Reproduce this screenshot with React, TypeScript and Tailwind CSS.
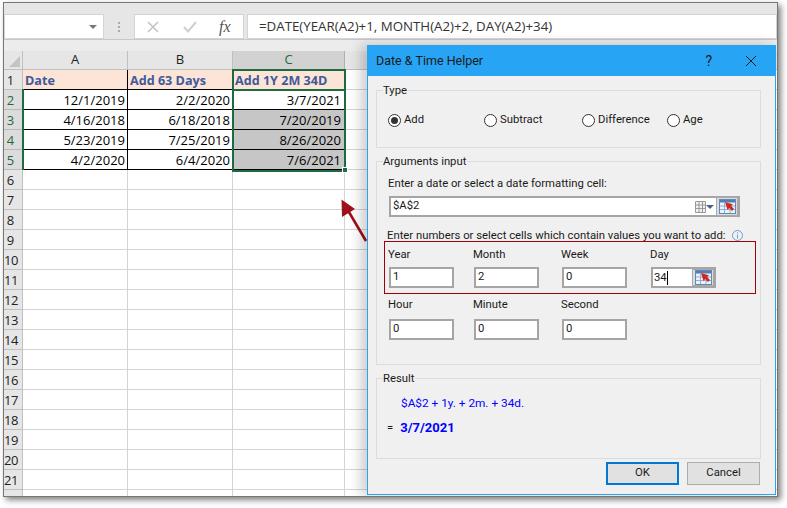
const rows: [string, string, string][] = [
  ["12/1/2019", "2/2/2020", "3/7/2021"],
  ["4/16/2018", "6/18/2018", "7/20/2019"],
  ["5/23/2019", "7/25/2019", "8/26/2020"],
  ["4/2/2020", "6/4/2020", "7/6/2021"],
];
const emptyRows = [6, 7, 8, 9, 10, 11, 12, 13, 14, 15, 16, 17, 18, 19, 20, 21];

function RefIcon() {
  return (
    <svg width="17" height="15" viewBox="0 0 17 15">
      <rect x="0.5" y="0.5" width="16" height="14" fill="#eaf2fb" stroke="#6488b4" />
      <rect x="1" y="1" width="15" height="2.5" fill="#4f7fb8" />
      <path d="M1 7H16M1 10.5H16M5.5 3.5V14M11 3.5V14" stroke="#8fb0d4" />
      <path d="M6 3L14 5.5L12.2 7L15 10L13 12L10.2 9L8.5 11Z" fill="#d0281c" />
    </svg>
  );
}

function RefButton({ className }: { className: string }) {
  return (
    <div className={`flex items-center justify-center border border-[#a9a9a9] bg-[#dcdcdc] ${className}`}>
      <RefIcon />
    </div>
  );
}

function Radio({ label, checked, className }: { label: string; checked?: boolean; className: string }) {
  return (
    <div className={`flex items-center gap-[3px] ${className}`}>
      <div className="flex h-[13px] w-[13px] items-center justify-center rounded-full border border-[#333] bg-white">
        {checked && <div className="h-[7px] w-[7px] rounded-full bg-[#333]" />}
      </div>
      <span>{label}</span>
    </div>
  );
}

function Field({ label, value, className, labelHeight }: { label: string; value: string; className: string; labelHeight: string }) {
  return (
    <div className={className}>
      <div className={`leading-[20px] ${labelHeight}`}>{label}</div>
      <div className="ml-px flex h-[21px] w-[65px] items-center border-2 border-[#a5a5a5] bg-white pl-[2px]">{value}</div>
    </div>
  );
}

function Group({ title, className, children }: { title: string; className: string; children: React.ReactNode }) {
  return (
    <div className={`relative ml-[8px] mr-[14px] border border-[#dcdcdc] ${className}`}>
      <span className="absolute left-[6px] top-[-8px] bg-[#f0f0f0] pr-[1px] leading-[15px]">{title}</span>
      {children}
    </div>
  );
}

export default function App() {
  return (
    <div className="h-[508px] w-[787px] overflow-hidden bg-white pl-[3px] pt-[2px] font-['Open_Sans',sans-serif] text-[13px] text-[#222]">
      <div className="relative flex h-[495px] w-[775px] flex-col overflow-hidden border border-[#777] shadow-[3px_3px_6px_rgba(0,0,0,0.5)]">
        {/* formula bar */}
        <div className="flex h-[37px] shrink-0 items-end gap-[3px] border-b border-[#c8c8c8] bg-[#e6e6e6]">
          <div className="flex h-[25px] w-[100px] items-center justify-end border border-[#d4d4d4] bg-white pr-[6px]">
            <div className="h-0 w-0 border-x-[4px] border-t-[4px] border-x-transparent border-t-[#777]" />
          </div>
          <div className="flex h-[25px] w-[24px] items-center justify-center">
            <div className="flex flex-col gap-[2px]">
              <div className="h-[2px] w-[2px] bg-[#aaa]" />
              <div className="h-[2px] w-[2px] bg-[#aaa]" />
              <div className="h-[2px] w-[2px] bg-[#aaa]" />
            </div>
          </div>
          <div className="flex h-[25px] w-[110px] items-center border border-[#d4d4d4] bg-white pl-[12px]">
            <svg width="12" height="12" viewBox="0 0 12 12" fill="none" stroke="#c4c4c4" strokeWidth="1.6">
              <path d="M1 1L11 11M11 1L1 11" />
            </svg>
            <svg className="ml-[24px]" width="14" height="12" viewBox="0 0 14 12" fill="none" stroke="#d0d0d0" strokeWidth="2">
              <path d="M1 6L5 10.5L13 1" />
            </svg>
            <span className="ml-[22px] font-['Liberation_Serif',serif] text-[16px] italic leading-none text-[#555]">fx</span>
          </div>
          <div className="flex h-[25px] flex-1 items-center border border-[#d4d4d4] bg-white pl-[11px] text-[13.3px] text-[#333]">
            =DATE(YEAR(A2)+1, MONTH(A2)+2, DAY(A2)+34)
          </div>
        </div>

        <div className="h-[11px] shrink-0 bg-[#ececec]" />

        {/* sheet */}
        <div className="flex h-[19px] shrink-0 leading-[17px]">
          <div className="flex w-[19px] items-end justify-end border-b border-r border-[#c0c0c0] bg-[#e6e6e6] pb-[2px] pr-[2px]">
            <div className="h-0 w-0 border-b-[11px] border-l-[11px] border-b-[#c4c4c4] border-l-transparent" />
          </div>
          <div className="w-[105px] border-b border-r border-[#c0c0c0] bg-[#e6e6e6] text-center">A</div>
          <div className="w-[105px] border-b border-r border-[#c0c0c0] bg-[#e6e6e6] text-center">B</div>
          <div className="w-[112px] border-b border-r border-[#b0b0b0] bg-[#d2d2d2] text-center text-[#1f6b41]">C</div>
          <div className="flex-1 border-b border-[#c0c0c0] bg-[#e6e6e6]" />
        </div>

        <div className="flex h-[20px] shrink-0 leading-[21px]">
          <div className="w-[19px] border-b border-r border-[#c0c0c0] bg-[#e6e6e6] pr-[5px] text-center">1</div>
          <div className="w-[105px] border-b border-r border-black bg-[#fce4d6] pl-[2px] text-[12.6px] font-bold text-[#3f5a9b]">Date</div>
          <div className="w-[105px] border-b border-r border-black bg-[#fce4d6] pl-[2px] text-[12.6px] font-bold text-[#3f5a9b]">Add 63 Days</div>
          <div className="w-[112px] border-b border-r border-black bg-[#fce4d6] pl-[2px] text-[12.6px] font-bold text-[#3f5a9b]">Add 1Y 2M 34D</div>
          <div className="flex-1 border-b border-[#d4d4d4]" />
        </div>

        {rows.map((row, i) => (
          <div key={row[0]} className="flex h-[20px] shrink-0 leading-[21px]">
            <div className="w-[19px] border-b border-r border-[#b8b8b8] bg-[#dcdcdc] pr-[5px] text-center text-[#1f6b41]">{i + 2}</div>
            <div className="w-[105px] border-b border-r border-black pr-[2px] text-right text-black">{row[0]}</div>
            <div className="w-[105px] border-b border-r border-black pr-[2px] text-right text-black">{row[1]}</div>
            <div className={`w-[112px] border-b border-r border-black pr-[3px] text-right text-black ${i > 0 ? "bg-[#c6c6c6]" : ""}`}>{row[2]}</div>
            <div className="flex-1 border-b border-[#d4d4d4]" />
          </div>
        ))}

        {emptyRows.map((n) => (
          <div key={n} className="flex h-[20px] shrink-0 leading-[21px]">
            <div className={`w-[19px] border-b border-r border-[#c0c0c0] bg-[#e6e6e6] pr-[5px] text-center ${n > 9 ? "tracking-[-0.5px]" : ""}`}>{n}</div>
            <div className="w-[105px] border-b border-r border-[#d4d4d4]" />
            <div className="w-[105px] border-b border-r border-[#d4d4d4]" />
            <div className="w-[112px] border-b border-r border-[#d4d4d4]" />
            <div className="flex-1 border-b border-[#d4d4d4]" />
          </div>
        ))}
        <div className="flex flex-1">
          <div className="w-[19px] border-r border-[#c0c0c0] bg-[#e6e6e6]" />
          <div className="w-[105px] border-r border-[#d4d4d4]" />
          <div className="w-[105px] border-r border-[#d4d4d4]" />
          <div className="w-[112px] border-r border-[#d4d4d4]" />
        </div>

        {/* selection overlays */}
        <div className="absolute left-[18px] top-[86px] h-[81px] w-[2px] bg-[#1f6b41]" />
        <div className="absolute left-[228px] top-[66px] h-[21px] w-[114px] border-x-2 border-t-2 border-[#1f6b41]" />
        <div className="absolute left-[228px] top-[86px] h-[83px] w-[114px] border-2 border-[#1f6b41]" />
        <div className="absolute left-[338px] top-[164px] h-[6px] w-[6px] border border-white bg-[#1f6b41]" />

        {/* callout arrow */}
        <svg className="absolute left-[330px] top-[190px]" width="40" height="55" viewBox="0 0 40 55" fill="none">
          <path d="M32 48L12 14" stroke="#a0101a" strokeWidth="2.6" />
          <path d="M7.5 6.5L8 24L21 16Z" fill="#a0101a" />
        </svg>

        {/* dialog */}
        <div className="absolute left-[363px] top-[42px] flex h-[450px] w-[409px] flex-col border border-[#29a4f2] bg-[#f0f0f0] font-['Roboto',sans-serif] text-[11.3px] text-[#1a1a1a] shadow-[-6px_0_12px_rgba(0,0,0,0.2)]">
          <div className="flex h-[30px] shrink-0 items-center bg-[#28a4f4] pl-[8px] text-[12.5px]">
            <span>Date &amp; Time Helper</span>
            <span className="ml-auto text-[14px]">?</span>
            <svg className="ml-[33px] mr-[18px]" width="12" height="12" viewBox="0 0 12 12" fill="none" stroke="#1a1a1a" strokeWidth="1">
              <path d="M1 1L11 11M11 1L1 11" />
            </svg>
          </div>

          <Group title="Type" className="mt-[14px] h-[58px]">
            <div className="flex pt-[21px]">
              <Radio label="Add" checked className="ml-[11px] w-[96px]" />
              <Radio label="Subtract" className="w-[98px]" />
              <Radio label="Difference" className="w-[85px]" />
              <Radio label="Age" className="" />
            </div>
          </Group>

          <Group title="Arguments input" className="mt-[13px] h-[204px]">
            <div className="pl-[11px] pt-[13px]">
              <div className="leading-[17px]">Enter a date or select a date formatting cell:</div>
              <div className="ml-px mt-[4px] flex h-[21px] w-[351px] items-center border-2 border-[#a5a5a5] bg-white pl-[2px]">
                <span>$A$2</span>
                <svg className="ml-auto" width="11" height="12" viewBox="0 0 11 12" fill="#f2f2f2" stroke="#999">
                  <path d="M0.5 0.5H10.5V11.5H0.5ZM0.5 4H10.5M0.5 7.5H10.5M4 0.5V11.5M7.5 0.5V11.5" />
                </svg>
                <div className="h-0 w-0 border-x-[4px] border-t-[4px] border-x-transparent border-t-[#4a6284]" />
                <RefButton className="ml-[2px] h-[19px] w-[22px]" />
              </div>
              <div className="ml-[-1px] mt-[10px] flex items-center leading-[17px]">
                <span>Enter numbers or select cells which contain values you want to add:</span>
                <svg className="ml-[6px]" width="11" height="11" viewBox="0 0 11 11" fill="none" stroke="#6d9ed8">
                  <circle cx="5.5" cy="5.5" r="5" />
                  <path d="M5.5 4.5V8.5M5.5 2.2V3.4" />
                </svg>
              </div>
            </div>
            <div className="ml-[7px] mr-[4px] mt-[-3px] flex h-[53px] border border-[#a0000a] pl-[3px] pt-[3px]">
              <Field label="Year" value="1" labelHeight="h-[22px]" className="w-[85px]" />
              <Field label="Month" value="2" labelHeight="h-[22px]" className="w-[88px]" />
              <Field label="Week" value="0" labelHeight="h-[22px]" className="w-[89px]" />
              <div>
                <div className="h-[22px] leading-[20px]">Day</div>
                <div className="ml-px flex h-[21px] w-[65px] items-center border-2 border-[#a5a5a5] bg-white pl-[1px]">
                  <span className="border-r border-black leading-[14px]">34</span>
                  <RefButton className="ml-auto h-[17px] w-[22px]" />
                </div>
              </div>
            </div>
            <div className="mt-[1px] flex pl-[11px]">
              <Field label="Hour" value="0" labelHeight="h-[24px]" className="w-[85px]" />
              <Field label="Minute" value="0" labelHeight="h-[24px]" className="w-[88px]" />
              <Field label="Second" value="0" labelHeight="h-[24px]" className="w-[89px]" />
            </div>
          </Group>

          <Group title="Result" className="mt-[13px] h-[81px]">
            <div className="pl-[24px] pt-[16px] text-[11.8px] leading-[17px] text-[#0000ff]">$A$2 + 1y. + 2m. + 34d.</div>
            <div className="mt-[7px] flex items-center pl-[10px] leading-[17px]">
              <span>=</span>
              <span className="ml-[7px] text-[13px] font-bold text-[#0000ff]">3/7/2021</span>
            </div>
          </Group>

          <div className="mr-[15px] mt-[3px] flex justify-end gap-[8px]">
            <div className="flex h-[23px] w-[73px] items-center justify-center border-2 border-[#0078d7] bg-[#e1e1e1]">OK</div>
            <div className="flex h-[23px] w-[73px] items-center justify-center border border-[#adadad] bg-[#e1e1e1]">Cancel</div>
          </div>
        </div>
      </div>
    </div>
  );
}
